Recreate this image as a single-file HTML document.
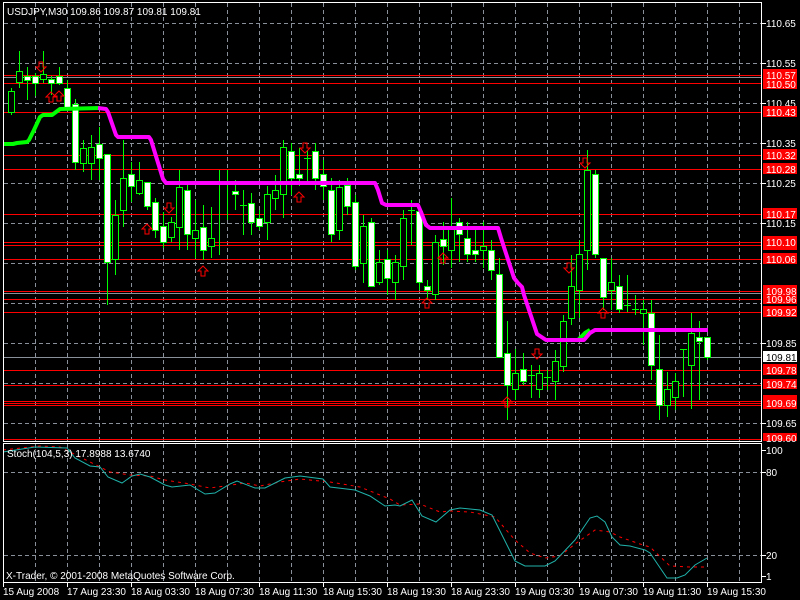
<!DOCTYPE html>
<html><head><meta charset="utf-8"><style>
html,body{margin:0;padding:0;background:#000;width:800px;height:600px;overflow:hidden}
svg{display:block}
text{font-family:"Liberation Sans",sans-serif;font-size:10px;fill:#fff}
</style></head><body>
<svg width="800" height="600" viewBox="0 0 800 600" xmlns="http://www.w3.org/2000/svg" shape-rendering="crispEdges">
<rect width="800" height="600" fill="#000"/>
<!-- grid -->
<g stroke="#8a9099" stroke-width="1" stroke-dasharray="4,3">
<path d="M35.5 3V441M67.5 3V441M99.5 3V441M131.5 3V441M163.5 3V441M195.5 3V441M227.5 3V441M259.5 3V441M291.5 3V441M323.5 3V441M355.5 3V441M387.5 3V441M419.5 3V441M451.5 3V441M483.5 3V441M515.5 3V441M547.5 3V441M579.5 3V441M611.5 3V441M643.5 3V441M675.5 3V441M707.5 3V441M739.5 3V441"/>
<path d="M4 23.5H761M4 63.5H761M4 103.5H761M4 143.5H761M4 183.5H761M4 223.5H761M4 263.5H761M4 303.5H761M4 343.5H761M4 383.5H761M4 423.5H761"/>
<path d="M35.5 444V582M67.5 444V582M99.5 444V582M131.5 444V582M163.5 444V582M195.5 444V582M227.5 444V582M259.5 444V582M291.5 444V582M323.5 444V582M355.5 444V582M387.5 444V582M419.5 444V582M451.5 444V582M483.5 444V582M515.5 444V582M547.5 444V582M579.5 444V582M611.5 444V582M643.5 444V582M675.5 444V582M707.5 444V582M739.5 444V582"/>
<path d="M4 472.5H761M4 555.5H761"/>
</g>
<!-- gray lines -->
<g stroke="#8a9099"><path d="M4 357.5H761M4 77.5H761M4 401.5H761M4 293.5H761"/></g>
<!-- red lines -->
<g stroke="#ff0000"><path d="M4 75.5H761M4 83.5H761M4 112.5H761M4 155.5H761M4 169.5H761M4 214.5H761M4 242.5H761M4 245.5H761M4 259.5H761M4 291.5H761M4 299.5H761M4 312.5H761M4 370.5H761M4 385.5H761M4 401.5H761M4 403.5H761M4 405.5H761M4 439.5H761"/></g>
<!-- candles -->
<g id="c" stroke="#00ff00" stroke-width="1"></g>
<g stroke="#00ff00" stroke-width="1">
<path d="M3.5 95V130M11.5 88V115M19.5 51V88M27.5 67V100M35.5 73V96M43.5 51V83M51.5 76V95M59.5 67V85M67.5 80V110M75.5 99V170M83.5 140V172M91.5 135V180M99.5 127V180M107.5 154V305M115.5 200V275M123.5 140V227M131.5 162V202M139.5 162V195M147.5 182V210M155.5 198V238M163.5 212V248M171.5 217V242M179.5 170V250M187.5 185V250M195.5 200V258M203.5 205V260M211.5 207V258M219.5 170V255M227.5 170V220M235.5 180V210M243.5 190V235M251.5 193V235M259.5 210V230M267.5 186V240M275.5 175V210M283.5 140V218M291.5 143V195M299.5 148V186M307.5 150V182M315.5 143V190M323.5 160V200M331.5 178V242M339.5 180V240M347.5 178V215M355.5 195V270M363.5 215V283M371.5 218V286M379.5 250V285M387.5 250V295M395.5 255V300M403.5 210V280M411.5 200V245M419.5 205V290M427.5 280V300M435.5 235V300M443.5 222V265M451.5 198V268M459.5 218V262M467.5 222V262M475.5 230V262M483.5 222V268M491.5 240V280M499.5 258V357M507.5 321V420M515.5 349V400M523.5 353V385M531.5 365V398M539.5 365V398M547.5 370V390M555.5 350V400M563.5 315V372M571.5 255V325M579.5 240V318M587.5 150V270M595.5 170V258M603.5 258V310M611.5 258V310M619.5 275V313M627.5 275V312M635.5 295V315M643.5 300V345M651.5 300V380M659.5 335V420M667.5 372V417M675.5 373V410M683.5 349V397M691.5 313V409M699.5 321V400M707.5 337V360"/>
</g>
<g stroke="#00ff00" stroke-width="1">
<g fill="#000">
<rect x="8.5" y="91.5" width="6" height="21"/><rect x="16.5" y="71.5" width="6" height="11"/><rect x="40.5" y="74.5" width="6" height="5"/><rect x="80.5" y="148.5" width="6" height="15"/><rect x="88.5" y="147.5" width="6" height="16"/><rect x="112.5" y="215.5" width="6" height="44"/><rect x="120.5" y="178.5" width="6" height="32"/><rect x="136.5" y="180.5" width="6" height="13"/><rect x="168.5" y="222.5" width="6" height="15"/><rect x="176.5" y="187.5" width="6" height="40"/><rect x="192.5" y="230.5" width="6" height="8"/><rect x="208.5" y="238.5" width="6" height="8"/><rect x="264.5" y="194.5" width="6" height="28"/><rect x="272.5" y="190.5" width="6" height="8"/><rect x="280.5" y="147.5" width="6" height="47"/><rect x="336.5" y="187.5" width="6" height="43"/><rect x="360.5" y="226.5" width="6" height="37"/><rect x="376.5" y="262.5" width="6" height="20"/><rect x="392.5" y="262.5" width="6" height="20"/><rect x="400.5" y="218.5" width="6" height="48"/><rect x="432.5" y="242.5" width="6" height="52"/><rect x="448.5" y="226.5" width="6" height="24"/><rect x="480.5" y="246.5" width="6" height="4"/><rect x="512.5" y="373.5" width="6" height="16"/><rect x="536.5" y="373.5" width="6" height="16"/><rect x="552.5" y="361.5" width="6" height="20"/><rect x="560.5" y="321.5" width="6" height="45"/><rect x="568.5" y="286.5" width="6" height="32"/><rect x="576.5" y="254.5" width="6" height="36"/><rect x="584.5" y="170.5" width="6" height="80"/><rect x="608.5" y="282.5" width="6" height="8"/><rect x="640.5" y="309.5" width="6" height="4"/><rect x="664.5" y="389.5" width="6" height="16"/><rect x="672.5" y="381.5" width="6" height="16"/><rect x="688.5" y="333.5" width="6" height="32"/>
</g>
<path d="M216 181.5H223M224 182.5H231M240 205.5H247M304 158.5H311M408 210.5H415M528 375.5H535M544 377.5H551M624 305.5H631M632 309.5H639M680 349.5H687"/>
<g fill="#fff">
<rect x="24.5" y="76.5" width="6" height="4"/><rect x="32.5" y="76.5" width="6" height="7"/><rect x="48.5" y="79.5" width="6" height="4"/><rect x="56.5" y="76.5" width="6" height="7"/><rect x="64.5" y="88.5" width="6" height="19"/><rect x="72.5" y="104.5" width="6" height="58"/><rect x="96.5" y="144.5" width="6" height="14"/><rect x="104.5" y="154.5" width="6" height="108"/><rect x="128.5" y="174.5" width="6" height="12"/><rect x="144.5" y="182.5" width="6" height="24"/><rect x="152.5" y="202.5" width="6" height="28"/><rect x="160.5" y="226.5" width="6" height="16"/><rect x="184.5" y="190.5" width="6" height="44"/><rect x="200.5" y="227.5" width="6" height="23"/><rect x="232.5" y="191.5" width="6" height="3"/><rect x="248.5" y="203.5" width="6" height="19"/><rect x="256.5" y="218.5" width="6" height="8"/><rect x="288.5" y="151.5" width="6" height="27"/><rect x="296.5" y="174.5" width="6" height="4"/><rect x="312.5" y="151.5" width="6" height="27"/><rect x="320.5" y="174.5" width="6" height="12"/><rect x="328.5" y="190.5" width="6" height="44"/><rect x="344.5" y="185.5" width="6" height="21"/><rect x="352.5" y="202.5" width="6" height="64"/><rect x="368.5" y="222.5" width="6" height="64"/><rect x="384.5" y="259.5" width="6" height="19"/><rect x="416.5" y="211.5" width="6" height="71"/><rect x="424.5" y="286.5" width="6" height="4"/><rect x="440.5" y="239.5" width="6" height="7"/><rect x="456.5" y="222.5" width="6" height="12"/><rect x="464.5" y="238.5" width="6" height="16"/><rect x="472.5" y="250.5" width="6" height="4"/><rect x="488.5" y="250.5" width="6" height="20"/><rect x="496.5" y="274.5" width="6" height="83"/><rect x="504.5" y="353.5" width="6" height="32"/><rect x="520.5" y="369.5" width="6" height="12"/><rect x="592.5" y="174.5" width="6" height="80"/><rect x="600.5" y="258.5" width="6" height="39"/><rect x="616.5" y="286.5" width="6" height="23"/><rect x="648.5" y="313.5" width="6" height="52"/><rect x="656.5" y="369.5" width="6" height="36"/><rect x="696.5" y="337.5" width="6" height="4"/><rect x="704.5" y="337.5" width="6" height="20"/>
</g>
</g>
<!-- indicator line -->
<g fill="none" stroke-width="4" shape-rendering="auto" stroke-linejoin="round">
<polyline stroke="#00ff00" points="3,144 13,144 17,143 27,142 29,140 34,130 40,117 43,115 52,115 56,112 60,109 100,108"/>
<polyline stroke="#ff00ff" points="98,108 106,109 108,112 116,135 118,137 149,137 151,140 163,179 166,183 375,183 378,190 382,203 386,205 418,205 421,212 426,225 430,228 498,228 501,238 514,278 518,283 522,287 524,295 537,334 546,340 576,340"/>
<polyline stroke="#00ff00" points="578,340 585,333 590,330"/>
<polyline stroke="#ff00ff" points="576,340 584,340 590,333 595,330 708,330"/>
</g>
<!-- arrows -->
<g fill="none" stroke="#ff0000" stroke-width="1" shape-rendering="auto">
<path id="dn" d="M-2 -5H2V0H5L0 5L-5 0H-2Z" transform="translate(41,67)"/>
<path d="M-2 -5H2V0H5L0 5L-5 0H-2Z" transform="translate(169,208)"/>
<path d="M-2 -5H2V0H5L0 5L-5 0H-2Z" transform="translate(305,148)"/>
<path d="M-2 -5H2V0H5L0 5L-5 0H-2Z" transform="translate(585,163)"/>
<path d="M-2 -5H2V0H5L0 5L-5 0H-2Z" transform="translate(569,268)"/>
<path d="M-2 -5H2V0H5L0 5L-5 0H-2Z" transform="translate(537,354)"/>
<path d="M-2 5H2V0H5L0 -5L-5 0H-2Z" transform="translate(51,97)"/>
<path d="M-2 5H2V0H5L0 -5L-5 0H-2Z" transform="translate(59,96)"/>
<path d="M-2 5H2V0H5L0 -5L-5 0H-2Z" transform="translate(147,229)"/>
<path d="M-2 5H2V0H5L0 -5L-5 0H-2Z" transform="translate(203,271)"/>
<path d="M-2 5H2V0H5L0 -5L-5 0H-2Z" transform="translate(299,197)"/>
<path d="M-2 5H2V0H5L0 -5L-5 0H-2Z" transform="translate(427,303)"/>
<path d="M-2 5H2V0H5L0 -5L-5 0H-2Z" transform="translate(443,258)"/>
<path d="M-2 5H2V0H5L0 -5L-5 0H-2Z" transform="translate(507,402)"/>
<path d="M-2 5H2V0H5L0 -5L-5 0H-2Z" transform="translate(603,313)"/>
</g>
<!-- stochastic -->
<g fill="none" stroke-width="1" shape-rendering="auto">
<polyline stroke="#ff0000" stroke-dasharray="3,4" points="3,450 40,446 60,447 80,457 110,472 130,475 150,476 165,480 190,484 210,488 225,486 245,483 260,486 280,482 300,479 330,482 360,487 390,499 400,505 420,504 440,512 450,511 470,512 495,517 515,540 530,553 545,558 560,556 575,544 595,530 610,532 620,537 640,544 650,547 670,566 690,567 707,567"/>
<polyline stroke="#20b2aa" points="3,452 35,447 67,448 75,458 90,466 100,467 108,477 122,483 132,476 140,474 150,477 165,485 172,487 190,485 205,494 215,493 230,484 237,481 255,488 265,488 285,478 300,476 323,479 330,487 355,490 370,496 385,506 395,505 400,506 412,500 422,516 436,522 450,510 460,508 480,510 492,515 515,561 525,566 545,566 555,561 575,540 590,518 597,516 605,522 612,537 620,545 630,546 645,550 650,553 667,578 677,578 685,575 695,565 707,558"/>
</g>
<!-- frames -->
<g fill="none" stroke="#fff" stroke-width="1">
<rect x="3.5" y="2.5" width="758" height="439"/>
<rect x="3.5" y="443.5" width="758" height="139"/>
<path d="M67.5 583V587M131.5 583V587M195.5 583V587M259.5 583V587M323.5 583V587M387.5 583V587M451.5 583V587M515.5 583V587M579.5 583V587M643.5 583V587M707.5 583V587M3.5 583V587"/>
<path d="M762 23.5H766M762 63.5H766M762 103.5H766M762 143.5H766M762 183.5H766M762 223.5H766M762 343.5H766M762 423.5H766M762 450.5H766M762 472.5H766M762 555.5H766M762 576.5H766"/>
</g>
<!-- price labels -->
<text x="766" y="27">110.65</text><text x="766" y="67">110.55</text><text x="766" y="107">110.45</text><text x="766" y="147">110.35</text><text x="766" y="187">110.25</text><text x="766" y="227">110.15</text><text x="766" y="347">109.85</text><text x="766" y="427">109.65</text>
<g fill="#ff0000">
<rect x="763" y="69" width="34" height="11"/><rect x="763" y="79" width="34" height="10"/><rect x="763" y="106" width="34" height="11"/><rect x="763" y="149" width="34" height="11"/><rect x="763" y="163" width="34" height="11"/><rect x="763" y="208" width="34" height="11"/><rect x="763" y="236" width="34" height="14"/><rect x="763" y="253" width="34" height="11"/><rect x="763" y="285" width="34" height="11"/><rect x="763" y="295" width="34" height="9"/><rect x="763" y="306" width="34" height="11"/><rect x="763" y="364" width="34" height="11"/><rect x="763" y="379" width="34" height="10"/><rect x="763" y="395" width="34" height="14"/><rect x="763" y="433" width="34" height="8"/>
</g>
<rect x="763" y="351" width="34" height="11" fill="#fff"/>
<g>
<text x="766" y="79">110.57</text><text x="766" y="88">110.50</text><text x="766" y="116">110.43</text><text x="766" y="159">110.32</text><text x="766" y="173">110.28</text><text x="766" y="218">110.17</text><text x="766" y="246">110.10</text><text x="766" y="263">110.06</text><text x="766" y="295">109.98</text><text x="766" y="303">109.96</text><text x="766" y="316">109.92</text><text x="766" y="361" style="fill:#000">109.81</text><text x="766" y="374">109.78</text><text x="766" y="388">109.74</text><text x="766" y="407">109.69</text><text x="766" y="442">109.60</text>
</g>
<text x="766" y="454">100</text><text x="766" y="476">80</text><text x="766" y="559">20</text><text x="766" y="580">1</text>
<text x="7" y="15">USDJPY,M30  109.86 109.87 109.81 109.81</text>
<text x="7" y="457">Stoch(104,5,3) 17.8988 13.6740</text>
<text x="6" y="579">X-Trader, © 2001-2008 MetaQuotes Software Corp.</text>
<g>
<text x="3" y="595">15 Aug 2008</text><text x="67" y="595">17 Aug 23:30</text><text x="131" y="595">18 Aug 03:30</text><text x="195" y="595">18 Aug 07:30</text><text x="259" y="595">18 Aug 11:30</text><text x="323" y="595">18 Aug 15:30</text><text x="387" y="595">18 Aug 19:30</text><text x="451" y="595">18 Aug 23:30</text><text x="515" y="595">19 Aug 03:30</text><text x="579" y="595">19 Aug 07:30</text><text x="643" y="595">19 Aug 11:30</text><text x="707" y="595">19 Aug 15:30</text>
</g>
</svg>
</body></html>
